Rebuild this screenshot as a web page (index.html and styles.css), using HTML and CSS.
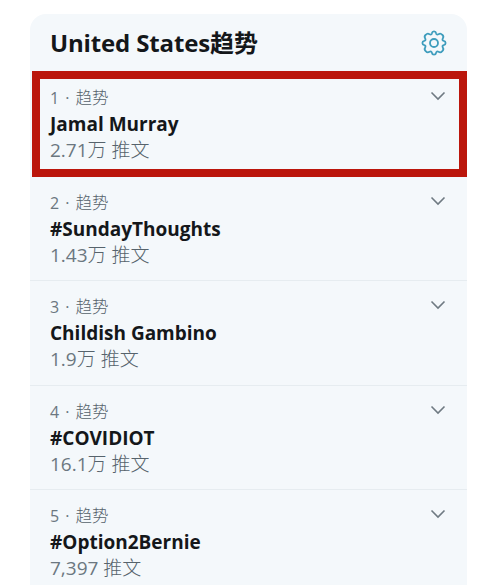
FILE: index.html
```html
<!DOCTYPE html>
<html lang="zh-CN">
<head>
    <meta charset="UTF-8">
    <meta name="viewport" content="width=device-width, initial-scale=1.0">
    <title>United States趋势</title>
    <link rel="stylesheet" href="styles.css">
</head>
<body>
    <div class="trends">
        <div class="header">
            <h2>United States<span class="zh">趋势</span></h2>
            <svg class="gear" viewBox="0 0 26 26">
                <path d="M10.9 3.2 Q11.2 1.4 13 1.4 Q14.8 1.4 15.1 3.2 Q15.6 5.2 17.5 4.2 Q19.6 2.8 21.2 4.8 Q23.2 6.4 21.8 8.5 Q20.8 10.4 22.8 10.9 Q24.6 11.2 24.6 13 Q24.6 14.8 22.8 15.1 Q20.8 15.6 21.8 17.5 Q23.2 19.6 21.2 21.2 Q19.6 23.2 17.5 21.8 Q15.6 20.8 15.1 22.8 Q14.8 24.6 13 24.6 Q11.2 24.6 10.9 22.8 Q10.4 20.8 8.5 21.8 Q6.4 23.2 4.8 21.2 Q2.8 19.6 4.2 17.5 Q5.2 15.6 3.2 15.1 Q1.4 14.8 1.4 13 Q1.4 11.2 3.2 10.9 Q5.2 10.4 4.2 8.5 Q2.8 6.4 4.8 4.8 Q6.4 2.8 8.5 4.2 Q10.4 5.2 10.9 3.2 Z"/>
                <circle cx="13" cy="13" r="4"/>
            </svg>
        </div>

        <div class="trend active">
            <div class="info">
                <p class="meta">1 · <span class="zh">趋势</span></p>
                <p class="name">Jamal Murray</p>
                <p class="count">2.71<span class="zh">万 推文</span></p>
            </div>
            <svg class="arrow" viewBox="0 0 16 10"><path d="M1.5 1.5 L8 8 L14.5 1.5"/></svg>
        </div>
        <div class="trend">
            <div class="info">
                <p class="meta">2 · <span class="zh">趋势</span></p>
                <p class="name">#SundayThoughts</p>
                <p class="count">1.43<span class="zh">万 推文</span></p>
            </div>
            <svg class="arrow" viewBox="0 0 16 10"><path d="M1.5 1.5 L8 8 L14.5 1.5"/></svg>
        </div>
        <div class="trend">
            <div class="info">
                <p class="meta">3 · <span class="zh">趋势</span></p>
                <p class="name">Childish Gambino</p>
                <p class="count">1.9<span class="zh">万 推文</span></p>
            </div>
            <svg class="arrow" viewBox="0 0 16 10"><path d="M1.5 1.5 L8 8 L14.5 1.5"/></svg>
        </div>
        <div class="trend">
            <div class="info">
                <p class="meta">4 · <span class="zh">趋势</span></p>
                <p class="name">#COVIDIOT</p>
                <p class="count">16.1<span class="zh">万 推文</span></p>
            </div>
            <svg class="arrow" viewBox="0 0 16 10"><path d="M1.5 1.5 L8 8 L14.5 1.5"/></svg>
        </div>
        <div class="trend">
            <div class="info">
                <p class="meta">5 · <span class="zh">趋势</span></p>
                <p class="name">#Option2Bernie</p>
                <p class="count">7,397 <span class="zh">推文</span></p>
            </div>
            <svg class="arrow" viewBox="0 0 16 10"><path d="M1.5 1.5 L8 8 L14.5 1.5"/></svg>
        </div>
    </div>
</body>
</html>
```
FILE: styles.css
```css
* {
    box-sizing: border-box;
}
body {
    margin: 0;
    height: 585px;
    overflow: hidden;
    background-color: #fff;
    font-family: "Open Sans", "Noto Sans CJK SC", sans-serif;
}
.trends {
    width: 437px;
    margin: 14px 0 0 30px;
    background-color: #f4f8fb;
    border-radius: 16px 16px 0 0;
}
.header {
    display: flex;
    justify-content: space-between;
    align-items: center;
    height: 57px;
    padding: 0 20px 0 20px;
}
h2 {
    margin: 0;
    font-size: 24px;
    line-height: 32px;
    font-weight: 700;
    letter-spacing: -0.15px;
    color: #14171a;
}
h2 .zh {
    letter-spacing: 0;
}
.gear {
    width: 26px;
    height: 26px;
    fill: none;
    stroke: #3f9dbd;
    stroke-width: 1.8;
}
.trend {
    display: flex;
    justify-content: space-between;
    height: 104.3px;
    padding: 14px 21px 0 20px;
    border-bottom: 1px solid #e6ecf0;
}
.trend.active {
    height: 106px;
    margin-left: 2px;
    border: 8px solid #bb160c;
    padding: 7px 13px 0 10px;
}
.trend p {
    margin: 0;
    white-space: nowrap;
}
.meta {
    font-size: 16px;
    line-height: 24px;
    word-spacing: 1.9px;
    color: #6b7780;
}
.meta .zh {
    font-size: 16.5px;
    font-weight: 300;
    color: #56636c;
}
.name {
    font-size: 19px;
    line-height: 28px;
    font-weight: 700;
    letter-spacing: 0;
    color: #14171a;
}
.count {
    font-size: 19px;
    line-height: 25px;
    color: #6b7780;
}
.count .zh {
    font-weight: 300;
    color: #56636c;
}
.arrow {
    width: 16px;
    height: 10px;
    margin-top: 5px;
    fill: none;
    stroke: #6f7a82;
    stroke-width: 1.6;
}
```
